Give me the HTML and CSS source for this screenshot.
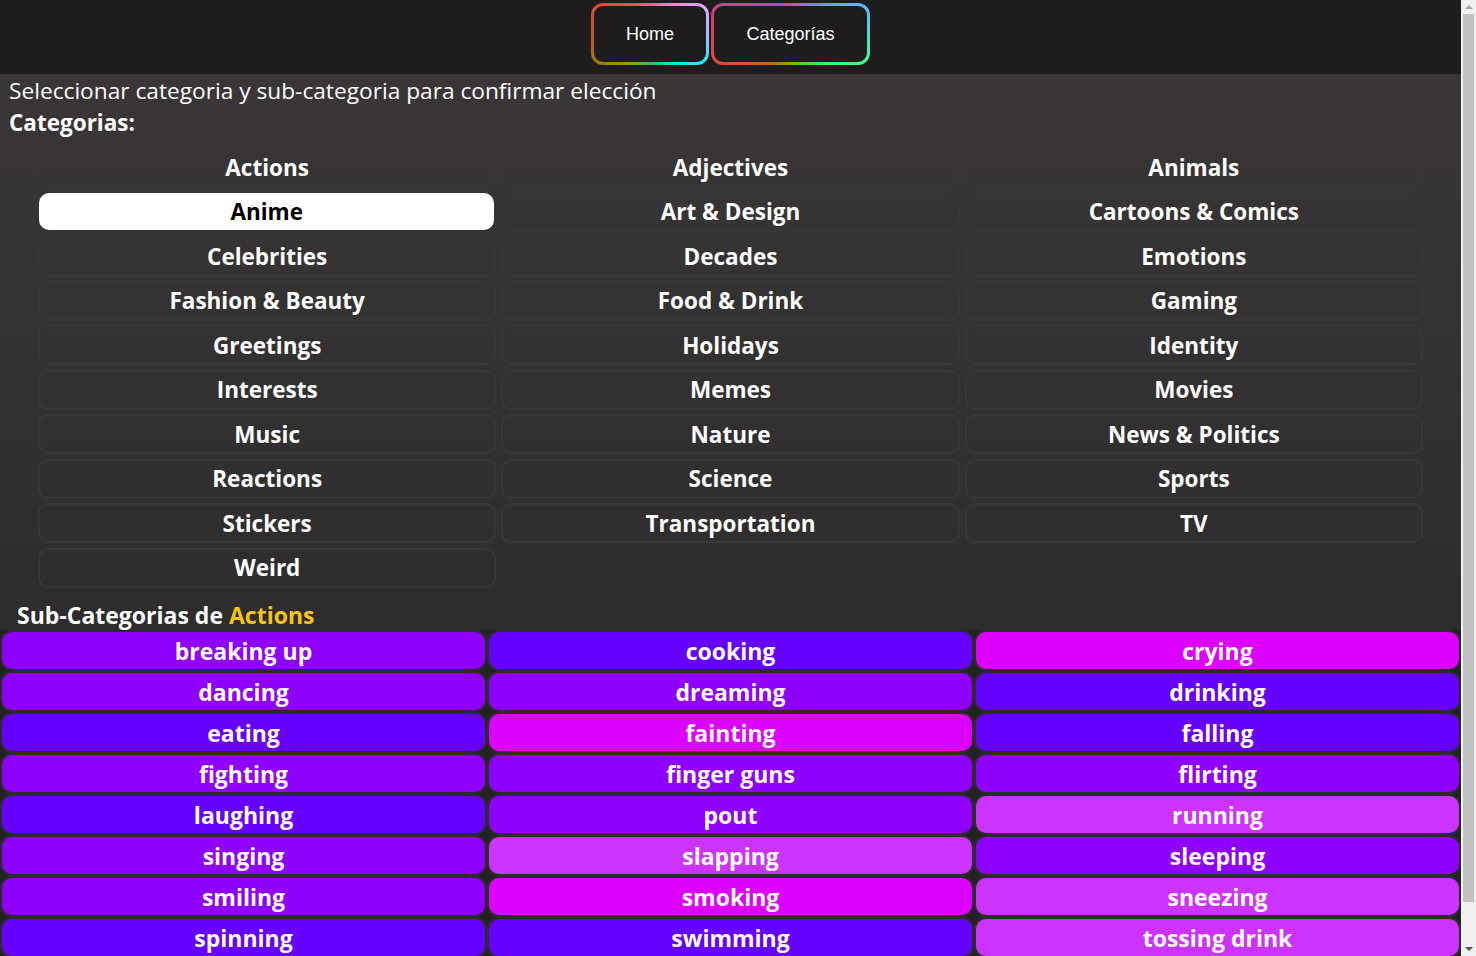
FILE: index.html
```html
<!DOCTYPE html>
<html lang="es">
<head>
<meta charset="utf-8">
<title>Categorias</title>
<link rel="stylesheet" href="styles.css">
</head>
<body>
<div class="app">
  <nav class="topbar">
    <a class="navbtn navbtn-home" href="#">Home</a>
    <a class="navbtn navbtn-cat" href="#">Categorías</a>
  </nav>
  <main class="page">
    <p class="intro">Seleccionar categoria y sub-categoria para confirmar elección</p>
    <h2 class="label">Categorias:</h2>
    <div class="cat-grid">
      <button class="cat">Actions</button>
      <button class="cat">Adjectives</button>
      <button class="cat">Animals</button>
      <button class="cat cat-active">Anime</button>
      <button class="cat">Art &amp; Design</button>
      <button class="cat">Cartoons &amp; Comics</button>
      <button class="cat">Celebrities</button>
      <button class="cat">Decades</button>
      <button class="cat">Emotions</button>
      <button class="cat">Fashion &amp; Beauty</button>
      <button class="cat">Food &amp; Drink</button>
      <button class="cat">Gaming</button>
      <button class="cat">Greetings</button>
      <button class="cat">Holidays</button>
      <button class="cat">Identity</button>
      <button class="cat">Interests</button>
      <button class="cat">Memes</button>
      <button class="cat">Movies</button>
      <button class="cat">Music</button>
      <button class="cat">Nature</button>
      <button class="cat">News &amp; Politics</button>
      <button class="cat">Reactions</button>
      <button class="cat">Science</button>
      <button class="cat">Sports</button>
      <button class="cat">Stickers</button>
      <button class="cat">Transportation</button>
      <button class="cat">TV</button>
      <button class="cat">Weird</button>
    </div>
    <h3 class="sub-title">Sub-Categorias de <span class="sub-hl">Actions</span></h3>
    <div class="sub-grid">
      <button class="sub c-violet">breaking up</button>
      <button class="sub c-indigo">cooking</button>
      <button class="sub c-magenta">crying</button>
      <button class="sub c-violet">dancing</button>
      <button class="sub c-violet">dreaming</button>
      <button class="sub c-indigo">drinking</button>
      <button class="sub c-indigo">eating</button>
      <button class="sub c-magenta">fainting</button>
      <button class="sub c-indigo">falling</button>
      <button class="sub c-violet">fighting</button>
      <button class="sub c-violet">finger guns</button>
      <button class="sub c-violet">flirting</button>
      <button class="sub c-indigo">laughing</button>
      <button class="sub c-violet">pout</button>
      <button class="sub c-orchid">running</button>
      <button class="sub c-violet">singing</button>
      <button class="sub c-orchid">slapping</button>
      <button class="sub c-violet">sleeping</button>
      <button class="sub c-violet">smiling</button>
      <button class="sub c-magenta">smoking</button>
      <button class="sub c-orchid">sneezing</button>
      <button class="sub c-indigo">spinning</button>
      <button class="sub c-indigo">swimming</button>
      <button class="sub c-orchid">tossing drink</button>
    </div>
  </main>
</div>
<div class="scrollbar" aria-hidden="true">
  <div class="sb-arrow sb-up"></div>
  <div class="sb-track"><div class="sb-thumb"></div></div>
  <div class="sb-arrow sb-down"></div>
</div>
</body>
</html>
```
FILE: styles.css
```css
html, body {
  margin: 0;
  padding: 0;
}
html {
  overflow: hidden;
}
body {
  background: #282828;
  color: #ffffff;
  font-family: "Open Sans", "Noto Sans", sans-serif;
  display: flex;
  align-items: flex-start;
}
.app {
  flex: 1;
  min-width: 0;
}
.scrollbar {
  width: 15px;
  height: 100vh;
  flex: none;
  position: sticky;
  top: 0;
  background: #f0f0f0;
  display: flex;
  flex-direction: column;
}
.sb-arrow {
  height: 14px;
  flex: none;
  display: flex;
  align-items: center;
  justify-content: center;
}
.sb-up::before,
.sb-down::before {
  content: "";
  width: 0;
  height: 0;
  border-left: 4px solid transparent;
  border-right: 4px solid transparent;
}
.sb-up::before {
  border-bottom: 4px solid #a3a3a3;
}
.sb-down::before {
  border-top: 4px solid #505050;
}
.sb-track {
  flex: 1;
  display: flex;
  flex-direction: column;
  padding: 0 2px;
}
.sb-thumb {
  height: 888px;
  background: #c1c1c1;
}
.topbar {
  height: 74px;
  background: #1e1c1d;
  display: flex;
  justify-content: center;
  align-items: flex-start;
  gap: 2px;
  padding-top: 3px;
  box-sizing: border-box;
}
.navbtn {
  display: flex;
  align-items: center;
  justify-content: center;
  height: 62px;
  box-sizing: border-box;
  border: 3px solid transparent;
  border-radius: 12px;
  color: #ffffff;
  text-decoration: none;
  font-family: "Liberation Sans", Arial, sans-serif;
  font-size: 18px;
}
.navbtn-home {
  width: 118px;
  background:
    linear-gradient(#1e1c1d, #1e1c1d) padding-box,
    conic-gradient(from 0deg, #ff5a8a 0deg, #f08ad8 45deg, #e0a4ff 62deg, #a0c4ff 90deg, #20e8ff 118deg, #20d8b0 150deg, #30c050 180deg, #90a800 215deg, #a07800 242deg, #c05a20 270deg, #e04838 298deg, #f05060 330deg, #ff5a8a 360deg) border-box;
}
.navbtn-cat {
  width: 159px;
  background:
    linear-gradient(#1e1c1d, #1e1c1d) padding-box,
    conic-gradient(from 0deg, #b050d0 0deg, #8080f0 40deg, #60b8ff 69deg, #50d8d0 90deg, #40ff90 111deg, #40e040 145deg, #70c000 175deg, #c07010 210deg, #e04838 249deg, #e04050 270deg, #d04080 291deg, #c040a8 330deg, #b050d0 360deg) border-box;
}
.page {
  background: linear-gradient(180deg, #3a3637 0%, #2f2d2e 55%, #272727 100%);
  padding-bottom: 8px;
}
.intro {
  margin: 0;
  padding: 2px 9px 0;
  font-size: 22.7px;
  line-height: 30px;
  font-weight: 400;
}
.label {
  margin: 0;
  padding: 2px 9px 0;
  font-size: 22.5px;
  line-height: 30px;
  font-weight: 700;
}
.cat-grid {
  display: grid;
  grid-template-columns: repeat(3, 1fr);
  column-gap: 5px;
  row-gap: 4.5px;
  padding: 9px 38px 0;
}
.cat {
  height: 40px;
  box-sizing: border-box;
  background: transparent;
  border: 2px solid #393637;
  border-radius: 10px;
  color: #ffffff;
  font-family: inherit;
  font-size: 22.5px;
  font-weight: 700;
  padding: 0;
}
.cat-active {
  background: #ffffff;
  border-color: #ffffff;
  color: #000000;
  margin: 0 2px 0 1px;
  height: 37px;
  align-self: center;
}
.sub-title {
  margin: 0;
  padding: 12px 17px 0;
  font-size: 23px;
  line-height: 30px;
  font-weight: 700;
}
.sub-hl {
  color: #f7c518;
}
.sub-grid {
  display: grid;
  grid-template-columns: repeat(3, 1fr);
  background: #222222;
}
.sub {
  height: 41px;
  box-sizing: border-box;
  border: 2px solid #2c2c2c;
  border-radius: 12px;
  color: #ffffff;
  font-family: inherit;
  font-size: 23px;
  font-weight: 700;
  padding: 2px 0 0;
  line-height: 30px;
}
.c-violet { background: #8f00ff; }
.c-indigo { background: #6600ff; }
.c-magenta { background: #dd00ff; }
.c-orchid { background: #cc33ff; }
```
